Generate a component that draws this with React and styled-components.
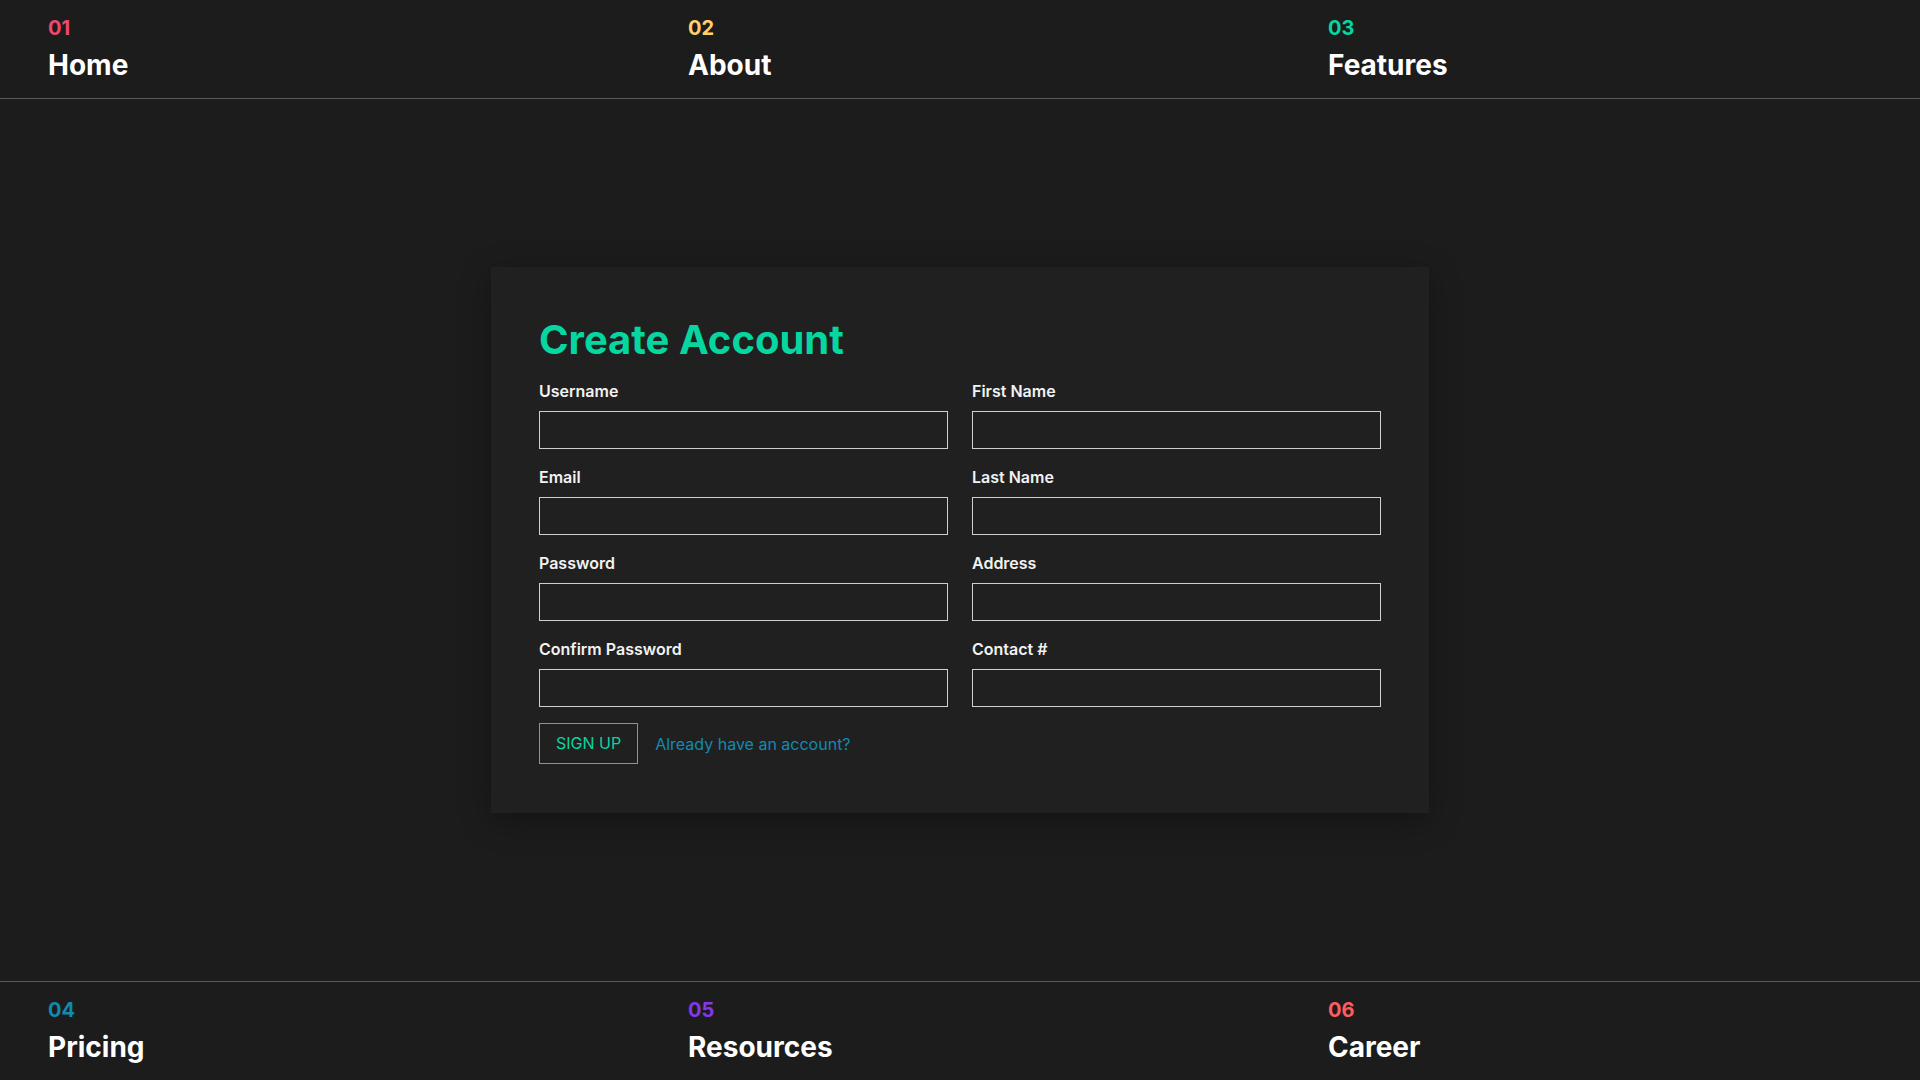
import React from 'react';
import styled, {createGlobalStyle} from 'styled-components';

const GlobalStyle = createGlobalStyle`
  * {
    box-sizing: border-box;
  }
  body {
    margin: 0;
    background: #1c1c1c;
    color: #fff;
    font-family: Inter, "Noto Sans", sans-serif;
  }
`;

const topLinks = [
  {num: '01', label: 'Home', color: '#ef476f'},
  {num: '02', label: 'About', color: '#ffd166'},
  {num: '03', label: 'Features', color: '#06d6a0'},
];

const bottomLinks = [
  {num: '04', label: 'Pricing', color: '#118ab2'},
  {num: '05', label: 'Resources', color: '#8338ec'},
  {num: '06', label: 'Career', color: '#ff5c5f'},
];

const fields = [
  ['Username', 'text'],
  ['First Name', 'text'],
  ['Email', 'email'],
  ['Last Name', 'text'],
  ['Password', 'password'],
  ['Address', 'text'],
  ['Confirm Password', 'password'],
  ['Contact #', 'tel'],
];

const App = () => {
  return (
    <>
      <GlobalStyle />
      <Page>
        <NavBar position="top">
          {topLinks.map(link => (
            <NavItem key={link.num} href="#">
              <NavNumber color={link.color}>{link.num}</NavNumber>
              <NavLabel>{link.label}</NavLabel>
            </NavItem>
          ))}
        </NavBar>
        <Main>
          <Card>
            <Title>Create Account</Title>
            <FieldGrid>
              {fields.map(([label, type]) => (
                <Field key={label}>
                  <Label>{label}</Label>
                  <Input type={type} />
                </Field>
              ))}
            </FieldGrid>
            <Actions>
              <SignUp>SIGN UP</SignUp>
              <LoginLink href="#">Already have an account?</LoginLink>
            </Actions>
          </Card>
        </Main>
        <NavBar position="bottom">
          {bottomLinks.map(link => (
            <NavItem key={link.num} href="#">
              <NavNumber color={link.color}>{link.num}</NavNumber>
              <NavLabel>{link.label}</NavLabel>
            </NavItem>
          ))}
        </NavBar>
      </Page>
    </>
  );
};

const Page = styled.div`
  display: flex;
  flex-direction: column;
  height: 100vh;
`;

const NavBar = styled.nav`
  display: grid;
  grid-template-columns: repeat(3, 1fr);
  height: 99px;
  flex-shrink: 0;
  ${props =>
    props.position === 'top'
      ? 'border-bottom: 1px solid #5a5a5a;'
      : 'border-top: 1px solid #5a5a5a;'}
`;

const NavItem = styled.a`
  display: flex;
  flex-direction: column;
  padding: 16px 48px 0;
  text-decoration: none;
  color: #fff;
`;

const NavNumber = styled.span`
  font-size: 20px;
  font-weight: 700;
  line-height: 24px;
  color: ${props => props.color};
  margin-bottom: 8px;
`;

const NavLabel = styled.span`
  font-size: 28px;
  font-weight: 700;
  line-height: 34px;
  color: #fff;
`;

const Main = styled.main`
  flex: 1;
  display: flex;
  align-items: center;
  justify-content: center;
`;

const Card = styled.div`
  width: 938px;
  padding: 49px 48px 49px;
  background: #202020;
  box-shadow: 0 8px 30px rgba(0, 0, 0, 0.3);
`;

const Title = styled.h1`
  margin: 0 0 18px;
  font-size: 40px;
  font-weight: 700;
  line-height: 48px;
  color: #06d6a0;
`;

const FieldGrid = styled.div`
  display: grid;
  grid-template-columns: 1fr 1fr;
  column-gap: 24px;
  row-gap: 19px;
`;

const Field = styled.label`
  display: flex;
  flex-direction: column;
  gap: 10px;
`;

const Label = styled.span`
  font-size: 16px;
  font-weight: 600;
  line-height: 19px;
  color: #f2f2f2;
`;

const Input = styled.input`
  height: 38px;
  background: transparent;
  border: 1px solid #cfcfcf;
  color: #fff;
  font-family: inherit;
  font-size: 16px;
  padding: 0 10px;
  outline: none;
`;

const Actions = styled.div`
  display: flex;
  align-items: center;
  gap: 17px;
  margin-top: 16px;
`;

const SignUp = styled.button`
  padding: 10px 16px;
  background: transparent;
  border: 1px solid #06d6a0;
  color: #06d6a0;
  font-family: inherit;
  font-size: 16px;
  line-height: 19px;
  cursor: pointer;
`;

const LoginLink = styled.a`
  font-size: 16px;
  color: #118ab2;
  text-decoration: none;
`;

export default App;
